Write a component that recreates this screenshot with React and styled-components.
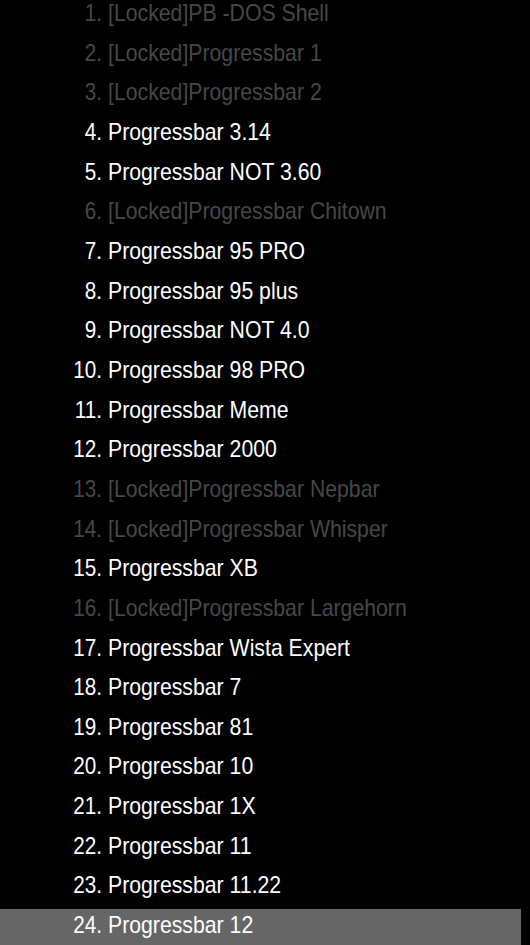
import styled, { createGlobalStyle } from 'styled-components'

const items = [
  { name: 'PB -DOS Shell', locked: true },
  { name: 'Progressbar 1', locked: true },
  { name: 'Progressbar 2', locked: true },
  { name: 'Progressbar 3.14' },
  { name: 'Progressbar NOT 3.60' },
  { name: 'Progressbar Chitown', locked: true },
  { name: 'Progressbar 95 PRO' },
  { name: 'Progressbar 95 plus' },
  { name: 'Progressbar NOT 4.0' },
  { name: 'Progressbar 98 PRO' },
  { name: 'Progressbar Meme' },
  { name: 'Progressbar 2000' },
  { name: 'Progressbar Nepbar', locked: true },
  { name: 'Progressbar Whisper', locked: true },
  { name: 'Progressbar XB' },
  { name: 'Progressbar Largehorn', locked: true },
  { name: 'Progressbar Wista Expert' },
  { name: 'Progressbar 7' },
  { name: 'Progressbar 81' },
  { name: 'Progressbar 10' },
  { name: 'Progressbar 1X' },
  { name: 'Progressbar 11' },
  { name: 'Progressbar 11.22' },
  { name: 'Progressbar 12', selected: true },
]

/*---> Component <---*/
function App() {
  return (
    <>
      <GlobalStyle />
      <List>
        {items.map((item, i) => (
          <Item key={i} $locked={item.locked} $selected={item.selected}>
            <Num>{i + 1}.</Num>
            <Label>{item.locked ? '[Locked]' : ''}{item.name}</Label>
          </Item>
        ))}
      </List>
    </>
  )
}

/*---> Styles <---*/
const GlobalStyle = createGlobalStyle`
  html, body {
    margin: 0;
    padding: 0;
    background: #000;
    height: 100%;
    overflow: hidden;
  }
  body {
    font-family: "Liberation Sans", Arial, sans-serif;
  }
`

const List = styled.div`
  width: 521px;
  margin-top: -3px;
  display: flex;
  flex-direction: column;
  gap: 4.17px;
`

const Item = styled.div`
  display: flex;
  height: 31px;
  padding-bottom: 4.5px;
  line-height: 31px;
  font-size: 24px;
  white-space: nowrap;
  color: ${(p) => (p.$locked ? '#474747' : '#ffffff')};
  background: ${(p) => (p.$selected ? '#666666' : 'transparent')};
`

const Num = styled.span`
  width: 102px;
  flex-shrink: 0;
  text-align: right;
  transform: scaleX(0.86);
  transform-origin: right center;
`

const Label = styled.span`
  margin-left: 6px;
  transform: scaleX(0.885);
  transform-origin: left center;
`

export default App
